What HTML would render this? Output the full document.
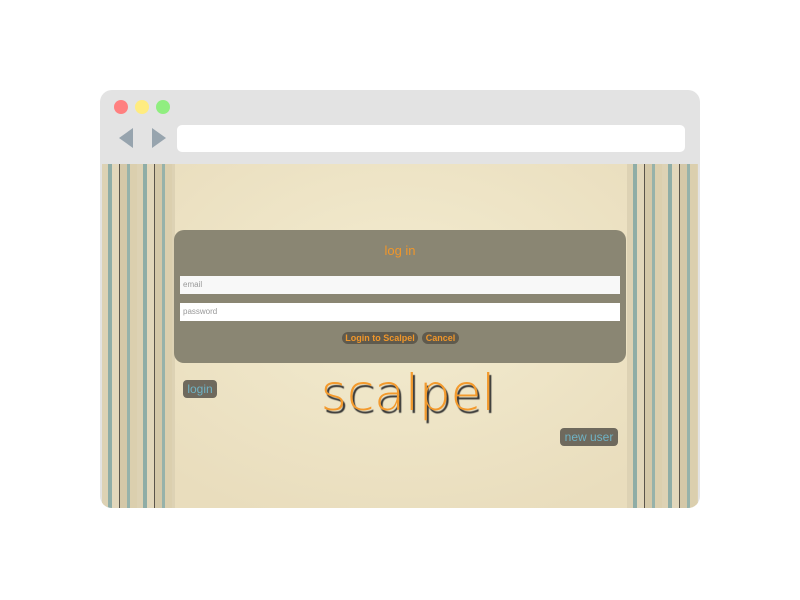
<!DOCTYPE html>
<html><head><style>
body{margin:0;width:800px;height:600px;background:#fff;position:relative;overflow:hidden;font-family:"Liberation Sans",sans-serif}
.frame{position:absolute;left:100px;top:90px;width:600px;height:418px;border-radius:12px;background:#e3e3e3;overflow:hidden}
.dot{position:absolute;top:10px;width:14px;height:14px;border-radius:50%}
.url{position:absolute;left:77px;top:35px;width:508px;height:27px;background:#fff;border-radius:5px}
.content{position:absolute;left:2px;top:74px;width:596px;height:344px;background:radial-gradient(ellipse at 50% 40%,#f3ecd0,#e9ddbd 80%)}
.side{position:absolute;top:0;height:344px;background:repeating-linear-gradient(90deg,#ddd2b4 0 6px,#8fada6 6px 10px,#e2d7bb 10px 17px,#5a544a 17px 18px,#d4c8a8 18px 25px,#96b2aa 25px 28px,#dbcfae 28px 35px)}
.dlg{position:absolute;left:72px;top:66px;width:452px;height:133px;background:#8a8673;border-radius:10px}
.dlg h{position:absolute;left:0;right:0;top:13px;text-align:center;color:#f0962a;font-size:13px}
.inp{position:absolute;left:6px;width:440px;height:18px;background:#f8f8f8;font-size:8px;color:#999;line-height:18px;text-indent:3px}
.btn{position:absolute;top:102px;height:12px;background:#5f5a4d;border-radius:6px;color:#f0962a;font-weight:bold;font-size:9px;line-height:12px;text-align:center}
.pill{position:absolute;background:#6e695d;color:#6fb2c4;border-radius:4px;font-size:12px;text-align:center;line-height:18px;height:18px}
.logo{position:absolute;left:0;width:596px;text-align:center;top:200px;font-size:50px;color:#f39a2d;text-shadow:2px 3px 1px #333;font-family:"DejaVu Sans",sans-serif;font-weight:300;margin-left:8px}
</style></head><body>
<div class="frame">
<div class="dot" style="left:14px;background:#ff8080"></div>
<div class="dot" style="left:35px;background:#ffec80"></div>
<div class="dot" style="left:56px;background:#90ee80"></div>
<svg style="position:absolute;left:18px;top:38px" width="50" height="22"><polygon points="15,0 15,20 1,10" fill="#97a4ae"/><polygon points="34,0 34,20 48,10" fill="#97a4ae"/></svg>
<div class="url"></div>
<div class="content">
<div class="side" style="left:0;width:73px"></div>
<div class="side" style="left:525px;width:71px"></div>
<div class="dlg"><h>log in</h>
<div class="inp" style="top:46px">email</div>
<div class="inp" style="top:73px;background:#fff">password</div>
<div class="btn" style="left:168px;width:76px">Login to Scalpel</div>
<div class="btn" style="left:248px;width:37px">Cancel</div>
</div>
<div class="pill" style="left:81px;top:216px;width:34px">login</div>
<div class="logo">scalpel</div>
<div class="pill" style="left:458px;top:264px;width:58px">new user</div>
</div>
</div>
</body></html>
